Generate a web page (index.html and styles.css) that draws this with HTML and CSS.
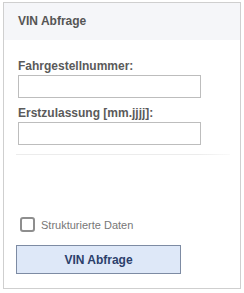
FILE: index.html
```html
<!DOCTYPE html>
<html lang="de">

<head>
    <meta charset="UTF-8">
    <meta name="viewport" content="width=device-width, initial-scale=1.0">
    <title>VIN Abfrage</title>
    <link rel="stylesheet" href="styles.css">
</head>

<body>

    <div class="panel">
        <div class="panel-head">VIN Abfrage</div>

        <!-- Fahrzeugdaten -->
        <form class="panel-body" id="vin-form">
            <label class="field-label" for="vin">Fahrgestellnummer:</label>
            <input type="text" id="vin" class="field-input">

            <label class="field-label second" for="ez">Erstzulassung [mm.jjjj]:</label>
            <input type="text" id="ez" class="field-input">

            <div class="divider"></div>

            <label class="check-row">
                <span class="check-box"></span>
                <span class="check-text">Strukturierte Daten</span>
            </label>

            <button type="submit" class="vin-button">VIN Abfrage</button>
        </form>
    </div>

</body>

</html>
```

FILE: styles.css
```css
body {
    font-family: "Liberation Sans", Arial, sans-serif;
    margin: 0;
    padding: 2px 0 0 3px;
    background-color: #fff;
}

.panel {
    width: 236px;
    height: 285px;
    border: 1px solid #cfcfcf;
    display: flex;
    flex-direction: column;
}

.panel-head {
    height: 37px;
    line-height: 37px;
    padding-left: 14px;
    background-color: #f5f6f9;
    color: #555;
    font-size: 12px;
    font-weight: bold;
}

.panel-body {
    display: flex;
    flex-direction: column;
    align-items: flex-start;
    padding: 19px 0 0 14px;
    margin: 0;
}

.field-label {
    font-size: 12px;
    line-height: 14px;
    font-weight: bold;
    color: #5a5a5a;
}

.field-label.second {
    margin-top: 8px;
}

.field-input {
    box-sizing: border-box;
    width: 183px;
    height: 23px;
    margin: 2px 0 0 0;
    border: 1px solid #bdbdbd;
    padding: 0 4px;
    font-size: 12px;
}

.divider {
    width: 214px;
    height: 1px;
    margin: 9px 0 0 -2px;
    background: linear-gradient(to right, #ececec 85%, #fafafa);
}

.check-row {
    display: flex;
    align-items: center;
    gap: 6px;
    margin: 62px 0 0 2px;
}

.check-box {
    box-sizing: border-box;
    width: 15px;
    height: 15px;
    border: 2px solid #8e8e8e;
    border-radius: 3px;
}

.check-text {
    font-size: 11px;
    color: #777;
}

.vin-button {
    box-sizing: border-box;
    width: 165px;
    height: 29px;
    margin: 13px 0 0 -2px;
    background-color: #dee8f8;
    border: 1px solid #7d8ba3;
    color: #2c3f6b;
    font-family: "Liberation Sans", Arial, sans-serif;
    font-size: 12px;
    font-weight: bold;
    cursor: pointer;
}
```
